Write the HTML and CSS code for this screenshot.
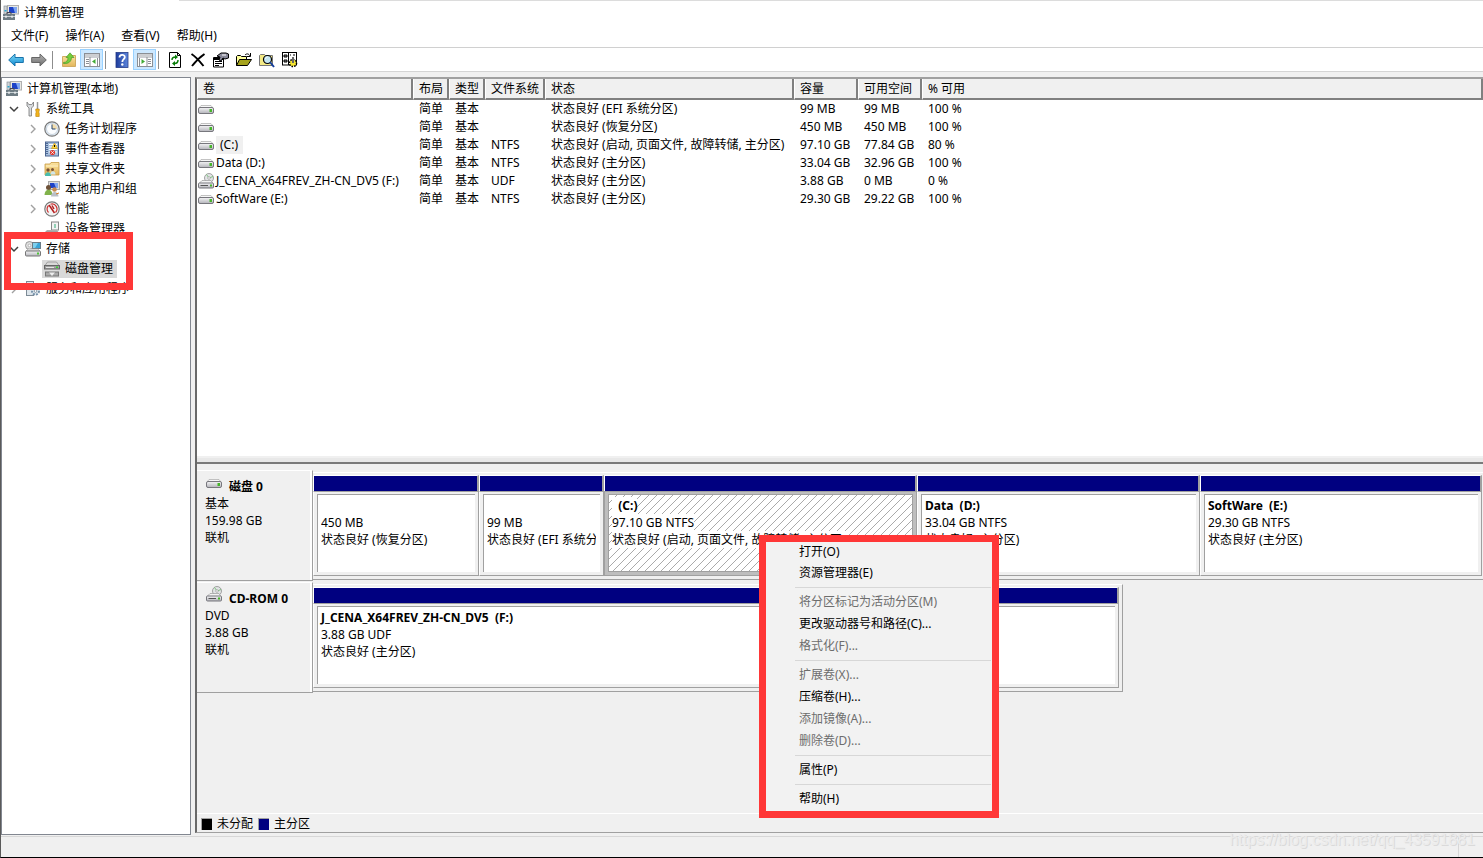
FILE: index.html
```html
<!DOCTYPE html>
<html lang="zh-CN">
<head>
<meta charset="utf-8">
<title>计算机管理</title>
<link rel="stylesheet" href="styles.css">
</head>
<body>
<svg class="defs" aria-hidden="true">
  <defs>
    <linearGradient id="g-blue" x1="0" y1="0" x2="0" y2="1"><stop offset="0" stop-color="#7fdcf8"/><stop offset="1" stop-color="#0d86cf"/></linearGradient>
    <linearGradient id="g-grey" x1="0" y1="0" x2="0" y2="1"><stop offset="0" stop-color="#b5b5b5"/><stop offset="1" stop-color="#6c6c6c"/></linearGradient>
    <linearGradient id="g-drive" x1="0" y1="0" x2="0" y2="1"><stop offset="0" stop-color="#f4f4f6"/><stop offset="1" stop-color="#b4b4ba"/></linearGradient>
    <linearGradient id="g-fold" x1="0" y1="0" x2="0" y2="1"><stop offset="0" stop-color="#fbe3a0"/><stop offset="1" stop-color="#e3b65a"/></linearGradient>
    <linearGradient id="g-help" x1="0" y1="0" x2="1" y2="0"><stop offset="0" stop-color="#1d3c9c"/><stop offset="1" stop-color="#5d86dc"/></linearGradient>
  </defs>
  <symbol id="i-computer" viewBox="0 0 16 16">
    <rect x="4.500" y=".5" width="11" height="8.500" fill="#e8e8e4" stroke="#b0b0b0"/><rect x="6" y="2" width="8" height="6" fill="#1d42c8"/><path d="M10 2h4v6h-2z" fill="#7fa6f2"/><path d="M8 9h4v2H8z" fill="#b5b5b5"/>
    <rect x="1" y="1" width="3" height="8" fill="#d0d4d8" stroke="#8b9298" stroke-width=".7"/><rect x="1.500" y="5" width="2" height="1.500" fill="#29a8d0"/>
    <path d="M4 9V7.500h4V9" fill="none" stroke="#445"/><rect x="0" y="9" width="12" height="6" fill="#6e7c84"/><path d="M0 11.500h12" stroke="#c9d2d6"/><path d="M3 10.500v2.500M9 10.500v2.500" stroke="#fff"/>
  </symbol>
  <symbol id="i-tools" viewBox="0 0 16 16">
    <path d="M2 1v4l2 2v8h2.500V7l2-2V1L6.800 3.500h-3z" fill="#d9dcdf" stroke="#777" stroke-width=".8"/>
    <path d="M12.500 1v8" stroke="#999" stroke-width="1.500"/><path d="M10.800 8h3.400v2l-.6 1 .6 1v3.500h-3.400V12l.6-1-.6-1z" fill="#f3b41b" stroke="#b77d08" stroke-width=".6"/>
  </symbol>
  <symbol id="i-clock" viewBox="0 0 16 16"><circle cx="8" cy="8" r="7.200" fill="#e4eef7" stroke="#777" stroke-width="1.200"/><circle cx="8" cy="8" r="5.500" fill="#fbfdff" stroke="#b9c6d2" stroke-width=".7"/><path d="M8 8h5.200A5.200 5.200 0 0 0 8 2.800z" fill="#f2ddad"/><path d="M8 3.500V8h3.500" fill="none" stroke="#24446f"/></symbol>
  <symbol id="i-event" viewBox="0 0 16 16"><rect x="1.500" y="1" width="13" height="14" fill="#a9c1df" stroke="#4b6490"/><path d="M5 3.500h8M5 6h8M5 8.500h8M5 11h8" stroke="#fff"/><path d="M3 2v12" stroke="#334e7c" stroke-dasharray="1 1" stroke-width="1.500"/><path d="M10.500 2l3 5.500h-6z" fill="#ffd83c" stroke="#c79200" stroke-width=".6"/><path d="M10.500 4v2" stroke="#000"/><circle cx="8.500" cy="11.500" r="2.600" fill="#e0392e"/><path d="M7.200 10.200l2.600 2.600M9.800 10.200l-2.600 2.600" stroke="#fff" stroke-width=".8"/></symbol>
  <symbol id="i-share" viewBox="0 0 16 16"><path d="M1 3h5l1-1.500h8V14H1z" fill="url(#g-fold)" stroke="#c79b41" stroke-width=".8"/><path d="M2 5h12" stroke="#fff3c7"/><circle cx="4" cy="9" r="1.700" fill="#7a5233"/><path d="M1 15c0-5 6-5 6 0z" fill="#49bdae"/><circle cx="8.500" cy="8.500" r="1.500" fill="#7a5233"/><path d="M6.500 13.500c0-4.500 5-4.500 5 0z" fill="#cfe6ea"/></symbol>
  <symbol id="i-users" viewBox="0 0 16 16"><rect x="4.500" y=".5" width="11" height="8" fill="#ddd" stroke="#aaa"/><rect x="6" y="2" width="8" height="5" fill="#1d42c8"/><path d="M10 2h4v5h-2z" fill="#7fa6f2"/><circle cx="4.500" cy="6.500" r="2.500" fill="#6e5138"/><path d="M.5 14c0-7 8-7 8 0z" fill="#80b24a"/><circle cx="10.500" cy="8.500" r="2.300" fill="#c58a50"/><path d="M7 15.500c0-6 7.500-6 7.500 0z" fill="#b9bfc6"/><path d="M12 13l3-1" stroke="#d77c24"/></symbol>
  <symbol id="i-perf" viewBox="0 0 16 16"><circle cx="8" cy="8" r="7.200" fill="#f3f3f3" stroke="#777" stroke-width="1.200"/><path d="M4.500 11.500A5 5 0 0 1 4.500 4.500M6.500 3.200A5 5 0 0 1 11.500 11.500" fill="none" stroke="#c33" stroke-width="1.200"/><path d="M5 4l5.500 8M8 4.500l2 3.500" stroke="#b51c1c" stroke-width="1.500"/></symbol>
  <symbol id="i-device" viewBox="0 0 16 16"><rect x="7.500" y="1" width="7" height="8" fill="#f4f4f4" stroke="#888"/><path d="M11 3v4" stroke="#3a7"/><path d="M0 12l3-3h10l2 3v3H0z" fill="url(#g-grey)"/></symbol>
  <symbol id="i-storage" viewBox="0 0 16 16"><circle cx="4.500" cy="4.500" r="4" fill="#ddd" stroke="#888" stroke-width=".8"/><circle cx="4.500" cy="4.500" r="1.300" fill="#fff" stroke="#999" stroke-width=".6"/><rect x="7.500" y="1.500" width="8" height="6" fill="#39a5d8" stroke="#6b7c86"/><path d="M8 2h5l-3 5H8z" fill="#7ed0ee"/><path d="M1 10l2-2h10l2 2z" fill="#eee" stroke="#999" stroke-width=".6"/><rect x=".5" y="10" width="15" height="5" rx="1" fill="url(#g-drive)" stroke="#777"/><rect x="12" y="11.500" width="2" height="2" fill="#4fc23a"/></symbol>
  <symbol id="i-disks" viewBox="0 0 16 16"><path d="M1 4.500L3.500 1h9L15 4.500z" fill="#d8d8d8" stroke="#888" stroke-width=".7"/><rect x=".5" y="4.500" width="15" height="3.500" fill="#a0a0a0" stroke="#666"/><path d="M2 6.500h8" stroke="#e4e4e4"/><rect x="12" y="5.500" width="2" height="1.500" fill="#37d033"/><path d="M2 11l1.500-2h9L14 11z" fill="#ddd"/><rect x="1.500" y="11" width="13" height="4" fill="#a9a9a9" stroke="#777"/><path d="M5 11.500l3 3.500 3-3.500" fill="#eee"/></symbol>
  <symbol id="i-service" viewBox="0 0 16 16"><rect x="1.500" y=".5" width="7" height="14" fill="#dde5eb" stroke="#7d8b96"/><path d="M3 3h4M3 5h4M3 7h4" stroke="#8ba3b4"/><circle cx="10.500" cy="10" r="3.500" fill="#e6eef4" stroke="#7692aa" stroke-width="2" stroke-dasharray="2 1"/><circle cx="10.500" cy="10" r="1.400" fill="#fff" stroke="#678" stroke-width=".7"/></symbol>
  <symbol id="i-drive" viewBox="0 0 16 9"><path d="M1 3L3 .5h10L15 3z" fill="#f7f7f7" stroke="#aaa" stroke-width=".7"/><rect x=".5" y="2.500" width="15" height="6" rx="1.500" fill="url(#g-drive)" stroke="#77777d"/><rect x="11.500" y="4" width="2.500" height="3" fill="#46b52a"/></symbol>
  <symbol id="i-cd" viewBox="0 0 16 16"><circle cx="11" cy="5" r="4.500" fill="#e2e4e6" stroke="#8d8d8d" stroke-width=".8"/><path d="M11 5L8.500 1.500M11 5l4-1.500" stroke="#7cc67c"/><circle cx="11" cy="5" r="1.300" fill="#fff" stroke="#888" stroke-width=".6"/><path d="M1 10.500l3-3h9l2 3z" fill="#f3f3f3" stroke="#999" stroke-width=".7"/><rect x=".5" y="10" width="15" height="5" rx="1" fill="url(#g-drive)" stroke="#77777d"/><path d="M2.500 12.500H10" stroke="#555"/><rect x="12" y="11.500" width="2" height="2" fill="#46b52a"/></symbol>
  <symbol id="i-back" viewBox="0 0 16 16"><path d="M.7 8L7 2v3.500h8.300v5H7V14z" fill="url(#g-blue)" stroke="#1873ab"/></symbol>
  <symbol id="i-forward" viewBox="0 0 16 16"><path d="M15.300 8L9 2v3.500H.7v5H9V14z" fill="url(#g-grey)" stroke="#666"/></symbol>
  <symbol id="i-up" viewBox="0 0 16 16"><path d="M1.500 14.500v-10h5l1.500-1h6.500v11z" fill="url(#g-fold)" stroke="#d0ab62"/><path d="M2.500 10.500c3 0 4.500-2 4.500-5H5L9 .8l4 4.700h-2.500c0 4-3 6.500-8 6z" fill="#74cf3c" stroke="#3b9221" stroke-width=".6"/></symbol>
  <symbol id="i-pane-left" viewBox="0 0 16 16"><rect x=".5" y="1.500" width="15" height="13" fill="#fff" stroke="#8b8f95"/><path d="M1 3h14M1 5h14" stroke="#9a9ea5"/><path d="M6 5v10M2 7.500h3M2 9.500h3M2 11.500h3M13.500 6v8" stroke="#8b8f95"/><path d="M11.500 7v5L8 9.500z" fill="#41ab36"/></symbol>
  <symbol id="i-pane-right" viewBox="0 0 16 16"><rect x=".5" y="1.500" width="15" height="13" fill="#fff" stroke="#8b8f95"/><path d="M1 3h14M1 5h14" stroke="#9a9ea5"/><path d="M10 5v10M11 7.500h3M11 9.500h3M11 11.500h3M2.500 6v8" stroke="#8b8f95"/><path d="M4.500 7v5L8 9.500z" fill="#41ab36"/></symbol>
  <symbol id="i-help" viewBox="0 0 16 16"><rect x="2" y=".5" width="12" height="15" fill="url(#g-help)" stroke="#243b87" stroke-width=".8"/><path d="M5.500 5.500C5.500 2 10.800 2 10.800 5.200c0 2-2.500 2-2.500 4.800" fill="none" stroke="#fff" stroke-width="1.800"/><circle cx="8.300" cy="12.500" r="1.200" fill="#fff"/></symbol>
  <symbol id="i-refresh" viewBox="0 0 16 16"><path d="M2.500.5h8l3 3v12h-11z" fill="#fff" stroke="#000"/><path d="M10.500.5v3h3" fill="none" stroke="#000"/><path d="M5 8c0-2 1-3 3.500-3M11 8c0 2.500-1 3.500-3.500 3.500" fill="none" stroke="#087d08" stroke-width="1.500"/><path d="M8 2.500v5L11 5zM8 9v5l-3-2.500z" fill="#087d08"/></symbol>
  <symbol id="i-delete" viewBox="0 0 16 16"><path d="M1.500 2c4 2.500 8 7 12 12M14.500 2C10 5 6 9 2 14" fill="none" stroke="#000" stroke-width="2"/></symbol>
  <symbol id="i-props" viewBox="0 0 16 16"><path d="M.5 5.500h10v9.500H.5z" fill="#fff" stroke="#000"/><path d="M1 7h9" stroke="#000" stroke-width="2"/><path d="M2 9.500h7M2 11.500h7M2 13.500h4" stroke="#000"/><path d="M4 4l4-3h5l2.500 1v4l-3.500 1-2-1-2 3-2-1 1-3z" fill="#889" stroke="#000"/><path d="M9 3h4" stroke="#fff"/></symbol>
  <symbol id="i-open" viewBox="0 0 16 16"><path d="M.5 13.500v-9l1-1h3l1 1h5v3" fill="#ffff9a" stroke="#000"/><path d="M.5 13.500l3-6h12l-4 6z" fill="#a5a31c" stroke="#000"/><path d="M9 3c2-2 4-1 5 1m.5-3v3.500H11" fill="none" stroke="#000"/></symbol>
  <symbol id="i-search" viewBox="0 0 16 16"><path d="M.5 13.500v-10l1-1h4l1 1h7v10z" fill="#f4ea86" stroke="#777"/><circle cx="8.500" cy="7.500" r="4" fill="#c5e6f2" stroke="#000" stroke-width="1.200"/><path d="M6.500 7c0-1 1-2 2-2" fill="none" stroke="#fff"/><path d="M11 10l4 5" stroke="#133d9c" stroke-width="2"/></symbol>
  <symbol id="i-settings" viewBox="0 0 16 16"><rect x=".5" y=".5" width="14" height="12.500" fill="#fff" stroke="#000"/><path d="M2 3h3v2H2zM2 8h3v2H2zM8 3h1M11 3h2" stroke="#000" fill="#888"/><path d="M6.500 1v12" stroke="#000"/><circle cx="11" cy="11" r="3.300" fill="#f5e532" stroke="#000" stroke-width="2" stroke-dasharray="1.500 1"/><circle cx="11" cy="11" r="2.800" fill="#f5e532"/><path d="M11 5v6" stroke="#666" stroke-width="2"/></symbol>
  <symbol id="i-down" viewBox="0 0 10 10"><path d="M1 3l4 4 4-4" fill="none" stroke="#404040" stroke-width="1.500"/></symbol>
  <symbol id="i-right" viewBox="0 0 10 10"><path d="M3 1l4 4-4 4" fill="none" stroke="#a0a0a0" stroke-width="1.400"/></symbol>
</svg>

<div class="window">
  <header class="titlebar"><svg class="icon"><use href="#i-computer"/></svg><span>计算机管理</span></header>
  <nav class="menubar">
    <button>文件(F)</button><button>操作(A)</button><button>查看(V)</button><button>帮助(H)</button>
  </nav>
  <div class="toolbar">
    <button class="tool" aria-label="后退"><svg class="icon"><use href="#i-back"/></svg></button>
    <button class="tool" aria-label="前进"><svg class="icon"><use href="#i-forward"/></svg></button>
    <span class="tool-sep"></span>
    <button class="tool" aria-label="上一级"><svg class="icon"><use href="#i-up"/></svg></button>
    <button class="tool is-on" aria-label="控制台树"><svg class="icon"><use href="#i-pane-left"/></svg></button>
    <span class="tool-sep"></span>
    <button class="tool" aria-label="帮助"><svg class="icon"><use href="#i-help"/></svg></button>
    <button class="tool is-on" aria-label="操作窗格"><svg class="icon"><use href="#i-pane-right"/></svg></button>
    <span class="tool-sep"></span>
    <button class="tool" aria-label="刷新"><svg class="icon"><use href="#i-refresh"/></svg></button>
    <button class="tool" aria-label="删除"><svg class="icon"><use href="#i-delete"/></svg></button>
    <button class="tool" aria-label="属性"><svg class="icon"><use href="#i-props"/></svg></button>
    <button class="tool" aria-label="打开"><svg class="icon"><use href="#i-open"/></svg></button>
    <button class="tool" aria-label="查找"><svg class="icon"><use href="#i-search"/></svg></button>
    <button class="tool" aria-label="设置"><svg class="icon"><use href="#i-settings"/></svg></button>
  </div>

  <div class="workspace">
    <aside class="tree">
      <button class="node"><span class="node-label"><svg class="icon"><use href="#i-computer"/></svg>计算机管理(本地)</span></button>
      <button class="node"><svg class="chevron"><use href="#i-down"/></svg><span class="node-label"><svg class="icon"><use href="#i-tools"/></svg>系统工具</span></button>
      <button class="node node-child"><svg class="chevron"><use href="#i-right"/></svg><span class="node-label"><svg class="icon"><use href="#i-clock"/></svg>任务计划程序</span></button>
      <button class="node node-child"><svg class="chevron"><use href="#i-right"/></svg><span class="node-label"><svg class="icon"><use href="#i-event"/></svg>事件查看器</span></button>
      <button class="node node-child"><svg class="chevron"><use href="#i-right"/></svg><span class="node-label"><svg class="icon"><use href="#i-share"/></svg>共享文件夹</span></button>
      <button class="node node-child"><svg class="chevron"><use href="#i-right"/></svg><span class="node-label"><svg class="icon"><use href="#i-users"/></svg>本地用户和组</span></button>
      <button class="node node-child"><svg class="chevron"><use href="#i-right"/></svg><span class="node-label"><svg class="icon"><use href="#i-perf"/></svg>性能</span></button>
      <button class="node node-child"><svg class="chevron"></svg><span class="node-label"><svg class="icon"><use href="#i-device"/></svg>设备管理器</span></button>
      <button class="node"><svg class="chevron"><use href="#i-down"/></svg><span class="node-label"><svg class="icon"><use href="#i-storage"/></svg>存储</span></button>
      <button class="node node-child"><svg class="chevron"></svg><span class="node-label is-selected"><svg class="icon"><use href="#i-disks"/></svg>磁盘管理</span></button>
      <button class="node"><svg class="chevron"><use href="#i-right"/></svg><span class="node-label"><svg class="icon"><use href="#i-service"/></svg>服务和应用程序</span></button>
      <div class="tree-mark"></div>
    </aside>

    <main class="content">
      <section class="volumes">
        <table class="volume-table">
          <colgroup><col class="c-vol"><col class="c-short"><col class="c-short"><col class="c-fs"><col class="c-state"><col class="c-size"><col class="c-size"><col></colgroup>
          <thead><tr><th>卷</th><th>布局</th><th>类型</th><th>文件系统</th><th>状态</th><th>容量</th><th>可用空间</th><th>% 可用</th></tr></thead>
          <tbody>
            <tr><td class="vol"><svg class="drive"><use href="#i-drive"/></svg></td><td>简单</td><td>基本</td><td></td><td>状态良好 (EFI 系统分区)</td><td>99 MB</td><td>99 MB</td><td>100 %</td></tr>
            <tr><td class="vol"><svg class="drive"><use href="#i-drive"/></svg></td><td>简单</td><td>基本</td><td></td><td>状态良好 (恢复分区)</td><td>450 MB</td><td>450 MB</td><td>100 %</td></tr>
            <tr><td class="vol"><svg class="drive"><use href="#i-drive"/></svg><span class="vol-current">(C:)</span></td><td>简单</td><td>基本</td><td>NTFS</td><td>状态良好 (启动, 页面文件, 故障转储, 主分区)</td><td>97.10 GB</td><td>77.84 GB</td><td>80 %</td></tr>
            <tr><td class="vol"><svg class="drive"><use href="#i-drive"/></svg><span>Data (D:)</span></td><td>简单</td><td>基本</td><td>NTFS</td><td>状态良好 (主分区)</td><td>33.04 GB</td><td>32.96 GB</td><td>100 %</td></tr>
            <tr><td class="vol"><svg class="icon"><use href="#i-cd"/></svg><span>J_CENA_X64FREV_ZH-CN_DV5 (F:)</span></td><td>简单</td><td>基本</td><td>UDF</td><td>状态良好 (主分区)</td><td>3.88 GB</td><td>0 MB</td><td>0 %</td></tr>
            <tr><td class="vol"><svg class="drive"><use href="#i-drive"/></svg><span>SoftWare (E:)</span></td><td>简单</td><td>基本</td><td>NTFS</td><td>状态良好 (主分区)</td><td>29.30 GB</td><td>29.22 GB</td><td>100 %</td></tr>
          </tbody>
        </table>
      </section>
      <div class="splitter"></div>
      <section class="disks">
        <div class="disk">
          <div class="disk-info">
            <h2><svg class="drive"><use href="#i-drive"/></svg>磁盘 0</h2>
            <p>基本</p><p>159.98 GB</p><p>联机</p>
          </div>
          <div class="graph">
            <div class="part" style="flex-grow:166"><div class="bar"></div><div class="part-body"><div class="part-box"><h3></h3><p>450 MB</p><p>状态良好 (恢复分区)</p></div></div></div>
            <div class="part" style="flex-grow:125"><div class="bar"></div><div class="part-body"><div class="part-box"><h3></h3><p>99 MB</p><p>状态良好 (EFI 系统分区)</p></div></div></div>
            <div class="part is-active" style="flex-grow:313"><div class="bar"></div><div class="part-body"><div class="part-box"><h3>&nbsp; (C:)</h3><p>97.10 GB NTFS</p><p>状态良好 (启动, 页面文件, 故障转储, 主分区)</p></div></div></div>
            <div class="part" style="flex-grow:283"><div class="bar"></div><div class="part-body"><div class="part-box"><h3>Data&nbsp; (D:)</h3><p>33.04 GB NTFS</p><p>状态良好 (主分区)</p></div></div></div>
            <div class="part" style="flex-grow:282"><div class="bar"></div><div class="part-body"><div class="part-box"><h3>SoftWare&nbsp; (E:)</h3><p>29.30 GB NTFS</p><p>状态良好 (主分区)</p></div></div></div>
          </div>
        </div>
        <div class="disk">
          <div class="disk-info">
            <h2><svg class="icon"><use href="#i-cd"/></svg>CD-ROM 0</h2>
            <p>DVD</p><p>3.88 GB</p><p>联机</p>
          </div>
          <div class="graph-cell">
            <div class="graph is-framed" style="width:69.2%">
              <div class="part" style="flex-grow:1"><div class="bar"></div><div class="part-body"><div class="part-box"><h3>J_CENA_X64FREV_ZH-CN_DV5&nbsp; (F:)</h3><p>3.88 GB UDF</p><p>状态良好 (主分区)</p></div></div></div>
            </div>
          </div>
        </div>
      </section>
      <footer class="legend"><span class="swatch swatch-free"></span><span>未分配</span><span class="swatch swatch-primary"></span><span>主分区</span></footer>
    </main>
  </div>
  <div class="statusbar"><span class="status-sep"></span></div>

  <div class="context-menu">
    <button>打开(O)</button>
    <button>资源管理器(E)</button>
    <hr>
    <button disabled>将分区标记为活动分区(M)</button>
    <button>更改驱动器号和路径(C)...</button>
    <button disabled>格式化(F)...</button>
    <hr>
    <button disabled>扩展卷(X)...</button>
    <button>压缩卷(H)...</button>
    <button disabled>添加镜像(A)...</button>
    <button disabled>删除卷(D)...</button>
    <hr>
    <button>属性(P)</button>
    <hr>
    <button>帮助(H)</button>
  </div>
  <div class="watermark">https://blog.csdn.net/qq_43591881</div>
</div>
</body>
</html>
```
FILE: styles.css
```css
* { box-sizing: border-box; }
body {
  margin: 0;
  font-family: "Noto Sans", "Noto Sans CJK SC", sans-serif;
  font-size: 12px;
  line-height: 18px;
  color: #000;
}
button {
  font: inherit;
  color: inherit;
  background: none;
  border: 0;
  padding: 0;
  text-align: left;
  white-space: nowrap;
}
h2, h3, p { margin: 0; font-size: 12px; }
.defs { position: absolute; width: 0; height: 0; }
.icon { width: 16px; height: 16px; flex: none; display: block; }
.drive { width: 16px; height: 9px; flex: none; display: block; }

.window {
  position: relative;
  display: flex;
  flex-direction: column;
  height: 100vh;
  background: #f0f0f0;
  border-left: 1px solid #5a5a5a;
  border-bottom: 1px solid #000;
  overflow: hidden;
}
.titlebar {
  position: relative;
  display: flex;
  align-items: center;
  gap: 5px;
  height: 25px;
  padding-left: 2px;
  background: #fff;
}
.titlebar::before {
  content: "";
  position: absolute;
  top: 0;
  left: 178px;
  right: 0;
  height: 1px;
  background: #dcdcdc;
}
.menubar {
  display: flex;
  gap: 17px;
  height: 23px;
  padding-left: 10px;
  background: #fff;
  border-bottom: 1px solid #d0d0d0;
}
.toolbar {
  display: flex;
  align-items: center;
  height: 24px;
  padding-left: 3px;
  background: #fff;
  border-bottom: 1px solid #d4d4d4;
}
.tool {
  display: flex;
  align-items: center;
  justify-content: center;
  width: 23px;
  height: 21px;
  border: 1px solid transparent;
}
.tool.is-on { background: #cce8ff; border-color: #99d1ff; }
.tool-sep { width: 1px; height: 18px; margin: 0 4px 0 2px; background: #8d8d8d; }

.workspace { flex: 1; display: flex; gap: 4px; min-height: 0; padding: 5px 0 1px; }
.tree {
  position: relative;
  flex: none;
  width: 190px;
  padding-top: 1px;
  background: #fff;
  border: 1px solid #828790;
}
.node { display: flex; align-items: center; width: 100%; height: 20px; padding-left: 2px; }
.node-child { padding-left: 21px; }
.chevron { width: 10px; height: 10px; margin: 0 4px 0 5px; flex: none; }
.node-label { display: flex; align-items: center; gap: 5px; height: 18px; padding: 0 4px 0 2px; }
.node-label.is-selected { background: #d9d9d9; }
.tree-mark {
  position: absolute;
  left: 2px;
  top: 154px;
  width: 129px;
  height: 58px;
  border: 7px solid #ff3737;
}

.content {
  flex: 1;
  display: flex;
  flex-direction: column;
  min-width: 0;
  border-style: solid;
  border-width: 2px 0 1px 2px;
  border-color: #a0a0a0 #a0a0a0 #a0a0a0 #696969;
  margin-bottom: 2px;
}
.volumes { flex: 1; min-height: 0; background: #fff; overflow: hidden; }
.volume-table { width: 100%; table-layout: fixed; border-collapse: separate; border-spacing: 0; }
.c-vol { width: 216px; }
.c-short { width: 36px; }
.c-fs { width: 60px; }
.c-state { width: 249px; }
.c-size { width: 64px; }
.volume-table th {
  height: 21px;
  padding: 1px 0 0 5px;
  line-height: 18px;
  font-weight: 400;
  text-align: left;
  white-space: nowrap;
  background: #f0f0f0;
  border-style: solid;
  border-width: 0 2px 2px 1px;
  border-color: #fff #808080 #808080 #fff;
}
.volume-table td { height: 18px; padding: 0 0 0 6px; white-space: nowrap; }
.volume-table .vol { display: flex; align-items: center; gap: 2px; padding-left: 1px; }
.vol-current { padding: 0 5px 0 4px; background: #f0f0f0; }
.splitter {
  height: 8px;
  flex: none;
  background: #e8e8e8;
  border-top: 2px solid #f0f0f0;
  border-bottom: 2px solid #7a7a7a;
}
.disks { flex: none; height: 349px; padding-top: 6px; }
.disk { display: flex; height: 112px; }
.disk-info {
  flex: none;
  width: 116px;
  height: 111px;
  padding: 7px 0 0 8px;
  border-top: 1px solid #fff;
  border-right: 1px solid #a0a0a0;
  border-bottom: 1px solid #a0a0a0;
  box-shadow: inset -2px 0 0 #fff;
}
.disk-info h2 { display: flex; gap: 7px; height: 17px; line-height: 17px; padding-left: 1px; }
.disk-info h2 .drive { margin-top: 1px; }
.disk-info h2 .icon { margin-top: -4px; }
.disk-info p { line-height: 17px; }
.graph-cell { flex: 1; min-width: 0; }
.graph {
  flex: 1;
  display: flex;
  min-width: 0;
  height: 108px;
  margin-top: 2px;
  padding: 2px 1px 3px 0;
  border-top: 1px solid #fff;
  border-bottom: 1px solid #a0a0a0;
}
.graph.is-framed { padding-right: 3px; border-right: 1px solid #a0a0a0; }
.part { display: flex; flex-direction: column; flex: 1 1 0; min-width: 0; }
.bar {
  height: 16px;
  background: #000080;
  border-style: solid;
  border-width: 1px 2px 0 1px;
  border-color: #fff #a0a0a0 #fff #fff;
}
.part-body {
  flex: 1;
  min-height: 0;
  padding: 2px 3px 3px;
  border: 1px solid #a0a0a0;
  border-left-color: #fff;
}
.part-box {
  height: 100%;
  padding: 2px 4px 0 3px;
  overflow: hidden;
  background: #fff;
  border-top: 1px solid #a0a0a0;
  border-left: 1px solid #a0a0a0;
}
.part-box h3 { height: 17px; line-height: 17px; }
.part-box p { line-height: 17px; white-space: nowrap; overflow: hidden; }
.is-active .part-body { background: #bebebe; border-color: #a0a0a0; }
.is-active .part-box {
  border: 1px solid #a0a0a0;
  background: #fff linear-gradient(135deg, transparent 44%, #aaa 47%, #aaa 53%, transparent 56%) 0 0 / 8px 8px;
}
.is-active h3, .is-active p { width: fit-content; background: #fff; }
.legend {
  display: flex;
  align-items: center;
  gap: 5px;
  flex: none;
  height: 19px;
  padding: 1px 0 0 4px;
  border-top: 1px solid #fff;
}
.swatch { width: 11px; height: 12px; border: 1px solid #a0a0a0; border-width: 1px 0 0 1px; }
.swatch-free { background: #000; }
.swatch-primary { background: #000080; }

.statusbar {
  display: flex;
  justify-content: flex-end;
  flex: none;
  height: 21px;
  padding-right: 24px;
  border-top: 1px solid #d7d7d7;
}
.status-sep { width: 1px; background: #d7d7d7; }

.context-menu {
  position: absolute;
  left: 758px;
  top: 535px;
  width: 240px;
  height: 283px;
  overflow: hidden;
  background: #f2f2f2;
  border: 7px solid #ff3737;
}
.context-menu button { display: block; width: 100%; height: 22px; padding-left: 33px; line-height: 22px; }
.context-menu button:first-child { height: 20px; line-height: 18px; }
.context-menu button:disabled { color: #6d6d6d; }
.context-menu hr { height: 1px; margin: 3px 1px 3px 29px; border: 0; background: #d7d7d7; }
.watermark {
  position: absolute;
  right: 8px;
  bottom: 7px;
  font-family: "Liberation Sans", sans-serif;
  font-size: 16px;
  line-height: 20px;
  color: #ececec;
  text-shadow: 1px 1px 0 #dadada;
}
```
